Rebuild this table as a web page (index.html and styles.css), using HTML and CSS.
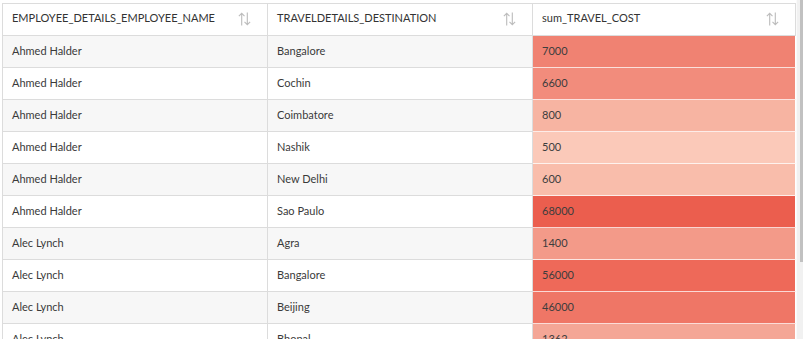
FILE: index.html
```html
<!DOCTYPE html>
<html>
<head>
<meta charset="utf-8">
<link rel="stylesheet" href="styles.css">
</head>
<body>
<div class="frame">
  <div class="grid-wrap">
    <div class="grid">
      <div class="hcell"><span>EMPLOYEE_DETAILS_EMPLOYEE_NAME</span><svg class="sort" viewBox="0 0 16 16"><path d="M5 15V2M2 5l3-3 3 3M11 1v13M8 11l3 3 3-3"/></svg></div>
      <div class="hcell"><span>TRAVELDETAILS_DESTINATION</span><svg class="sort" viewBox="0 0 16 16"><path d="M5 15V2M2 5l3-3 3 3M11 1v13M8 11l3 3 3-3"/></svg></div>
      <div class="hcell hlast"><span>sum_TRAVEL_COST</span><svg class="sort" viewBox="0 0 16 16"><path d="M5 15V2M2 5l3-3 3 3M11 1v13M8 11l3 3 3-3"/></svg></div>

      <div class="cell odd">Ahmed Halder</div><div class="cell odd">Bangalore</div><div class="cell heat" style="background:#f08272">7000</div>
      <div class="cell">Ahmed Halder</div><div class="cell">Cochin</div><div class="cell heat" style="background:#f28c7c">6600</div>
      <div class="cell odd">Ahmed Halder</div><div class="cell odd">Coimbatore</div><div class="cell heat" style="background:#f7b4a2">800</div>
      <div class="cell">Ahmed Halder</div><div class="cell">Nashik</div><div class="cell heat" style="background:#fbc9b9">500</div>
      <div class="cell odd">Ahmed Halder</div><div class="cell odd">New Delhi</div><div class="cell heat" style="background:#f9bdab">600</div>
      <div class="cell">Ahmed Halder</div><div class="cell">Sao Paulo</div><div class="cell heat" style="background:#eb5e4e">68000</div>
      <div class="cell odd">Alec Lynch</div><div class="cell odd">Agra</div><div class="cell heat" style="background:#f39a89">1400</div>
      <div class="cell">Alec Lynch</div><div class="cell">Bangalore</div><div class="cell heat" style="background:#ee6959">56000</div>
      <div class="cell odd">Alec Lynch</div><div class="cell odd">Beijing</div><div class="cell heat" style="background:#ef7666">46000</div>
      <div class="cell">Alec Lynch</div><div class="cell">Bhopal</div><div class="cell heat" style="background:#f4a696">1362</div>
    </div>
  </div>
  <div class="scrollbar"><div class="thumb"></div></div>
</div>
</body>
</html>
```
FILE: styles.css
```css
html, body {
  margin: 0;
  padding: 0;
  height: 339px;
  overflow: hidden;
  background: #fff;
}
body {
  font-family: "Lato", "Open Sans", sans-serif;
  font-size: 11px;
  color: #3a3a3a;
}
.frame {
  display: flex;
  height: 339px;
}
.grid-wrap {
  padding: 3px 0 0 2px;
}
.grid {
  display: grid;
  grid-template-columns: 265px 265px 263px;
  grid-auto-rows: 32px;
  border-left: 1px solid #dcdcdc;
  border-top: 1px solid #dcdcdc;
}
.hcell, .cell {
  box-sizing: border-box;
  border-right: 1px solid #dcdcdc;
  border-bottom: 1px solid #dcdcdc;
  display: flex;
  align-items: center;
  padding-left: 9px;
  padding-bottom: 2px;
  white-space: nowrap;
}
.hcell {
  justify-content: space-between;
  padding-right: 15px;
  padding-bottom: 5px;
  background: #fff;
  color: #333;
}
.sort {
  width: 15px;
  height: 16px;
  margin-top: 4px;
  fill: none;
  stroke: #bdbdbd;
  stroke-width: 1.2;
}
.cell {
  background: #fff;
}
.cell.odd {
  background: #f7f7f7;
}
.cell.heat {
  border-bottom-color: rgba(255, 255, 255, 0.75);
  border-right-color: #fff;
  color: #3d3d3d;
}
.scrollbar {
  width: 7px;
  flex: none;
  box-sizing: border-box;
  padding-left: 3px;
  background: #f1f1f1;
  border-left: 1px solid #fafafa;
}
.thumb {
  height: 262px;
  background: #c1c1c1;
}
```
